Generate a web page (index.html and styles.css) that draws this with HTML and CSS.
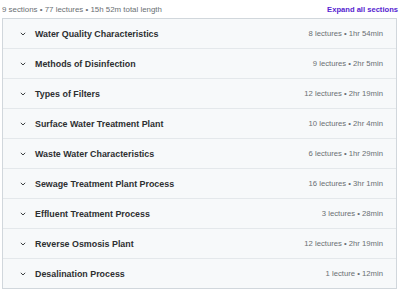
FILE: index.html
```html
<!DOCTYPE html>
<html>
<head>
<meta charset="utf-8">
<link rel="stylesheet" href="styles.css">
</head>
<body>
<div class="page">
  <div class="summary">
    <span class="stats">9 sections • 77 lectures • 15h 52m total length</span>
    <span class="expand">Expand all sections</span>
  </div>
  <div class="list">
    <div class="row"><span class="chev"><svg width="6" height="4" viewBox="0 0 6 4"><path d="M0.8 0.8l2.2 2.2 2.2-2.2" fill="none" stroke="#3e4143" stroke-width="1"/></svg></span><span class="title">Water Quality Characteristics</span><span class="meta">8 lectures • 1hr 54min</span></div>
    <div class="row"><span class="chev"><svg width="6" height="4" viewBox="0 0 6 4"><path d="M0.8 0.8l2.2 2.2 2.2-2.2" fill="none" stroke="#3e4143" stroke-width="1"/></svg></span><span class="title">Methods of Disinfection</span><span class="meta">9 lectures • 2hr 5min</span></div>
    <div class="row"><span class="chev"><svg width="6" height="4" viewBox="0 0 6 4"><path d="M0.8 0.8l2.2 2.2 2.2-2.2" fill="none" stroke="#3e4143" stroke-width="1"/></svg></span><span class="title">Types of Filters</span><span class="meta">12 lectures • 2hr 19min</span></div>
    <div class="row"><span class="chev"><svg width="6" height="4" viewBox="0 0 6 4"><path d="M0.8 0.8l2.2 2.2 2.2-2.2" fill="none" stroke="#3e4143" stroke-width="1"/></svg></span><span class="title">Surface Water Treatment Plant</span><span class="meta">10 lectures • 2hr 4min</span></div>
    <div class="row"><span class="chev"><svg width="6" height="4" viewBox="0 0 6 4"><path d="M0.8 0.8l2.2 2.2 2.2-2.2" fill="none" stroke="#3e4143" stroke-width="1"/></svg></span><span class="title">Waste Water Characteristics</span><span class="meta">6 lectures • 1hr 29min</span></div>
    <div class="row"><span class="chev"><svg width="6" height="4" viewBox="0 0 6 4"><path d="M0.8 0.8l2.2 2.2 2.2-2.2" fill="none" stroke="#3e4143" stroke-width="1"/></svg></span><span class="title">Sewage Treatment Plant Process</span><span class="meta">16 lectures • 3hr 1min</span></div>
    <div class="row"><span class="chev"><svg width="6" height="4" viewBox="0 0 6 4"><path d="M0.8 0.8l2.2 2.2 2.2-2.2" fill="none" stroke="#3e4143" stroke-width="1"/></svg></span><span class="title">Effluent Treatment Process</span><span class="meta">3 lectures • 28min</span></div>
    <div class="row"><span class="chev"><svg width="6" height="4" viewBox="0 0 6 4"><path d="M0.8 0.8l2.2 2.2 2.2-2.2" fill="none" stroke="#3e4143" stroke-width="1"/></svg></span><span class="title">Reverse Osmosis Plant</span><span class="meta">12 lectures • 2hr 19min</span></div>
    <div class="row"><span class="chev"><svg width="6" height="4" viewBox="0 0 6 4"><path d="M0.8 0.8l2.2 2.2 2.2-2.2" fill="none" stroke="#3e4143" stroke-width="1"/></svg></span><span class="title">Desalination Process</span><span class="meta">1 lecture • 12min</span></div>
  </div>
</div>
</body>
</html>
```

FILE: styles.css
```css
html, body {
  margin: 0;
  padding: 0;
  background: #ffffff;
}
body {
  font-family: "Liberation Sans", Arial, sans-serif;
  color: #2d2f31;
}
.page {
  width: 396px;
  padding: 0 2px 0 2px;
}
.summary {
  display: flex;
  justify-content: space-between;
  align-items: center;
  height: 18px;
  font-size: 7.9px;
}
.stats {
  color: #6a6f73;
}
.expand {
  color: #5624d0;
  font-weight: bold;
  font-size: 7.6px;
}
.list {
  border: 1px solid #d1d7dc;
  border-bottom: none;
  width: 395px;
  box-sizing: border-box;
}
.row {
  display: flex;
  align-items: center;
  height: 30px;
  box-sizing: border-box;
  background: #f7f9fa;
  border-bottom: 1px solid #e4e8eb;
  padding: 0 13px 0 17px;
}
.row:last-child {
  border-bottom: 1px solid #d1d7dc;
}
.chev {
  display: flex;
  width: 15px;
}
.title {
  font-weight: bold;
  font-size: 8.9px;
  flex: 1;
}
.meta {
  font-size: 7.7px;
  color: #6a6f73;
}
```
